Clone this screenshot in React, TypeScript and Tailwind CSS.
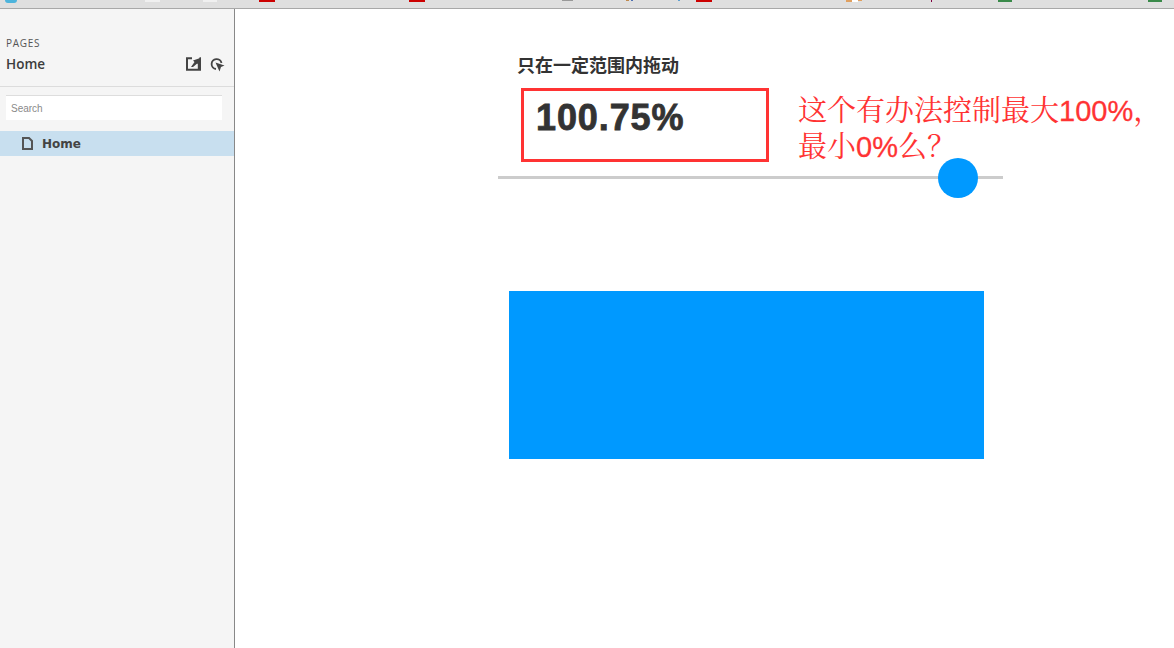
import React from "react";

const frags: [number, number, string, number][] = [
  [145, 15, "#f0f0f0", 2],
  [203, 14, "#f0f0f0", 2],
  [259, 16, "#cc0000", 2],
  [409, 16, "#cc0000", 2],
  [562, 11, "#999999", 1],
  [626, 3, "#c08a50", 1],
  [631, 2, "#5070b0", 1],
  [678, 2, "#60a0d0", 1],
  [696, 16, "#cc0000", 2],
  [846, 6, "#e0a060", 2],
  [852, 6, "#ffffff", 2],
  [858, 4, "#e0a060", 1],
  [931, 1, "#800040", 2],
  [998, 14, "#3a8a4a", 2],
  [1148, 14, "#3a8a4a", 2],
];

export default function App() {
  return (
    <div className="h-[648px] w-[1174px] overflow-hidden bg-white flex flex-col">
      <div className="relative h-[9px] shrink-0 bg-[#dfdfdf] border-b border-[#a8a8a8]">
        <div className="absolute top-0 left-[5px] w-[12px] h-[3px] rounded-b-full bg-[#4db4dc]" />
        {frags.map(([x, w, c, h], i) => (
          <div key={i} className="absolute top-0" style={{ left: x, width: w, background: c, height: h }} />
        ))}
      </div>
      <div className="flex flex-1 min-h-0">
        <aside className="w-[235px] shrink-0 bg-[#f5f5f5] border-r border-[#888888] flex flex-col font-['Open_Sans',sans-serif]">
          <div className="h-[78px] border-b border-[#dcdcdc] pl-[6px] pr-[10px] pt-[27px] shrink-0">
            <div className="text-[10px] leading-[14px] tracking-[0.7px] text-[#555555]">PAGES</div>
            <div className="flex items-center justify-between mt-[4px] h-[20px]">
              <span className="text-[13.5px] font-semibold text-[#3c3c3c] leading-[20px]">Home</span>
              <div className="flex items-center gap-[9px] mr-[-1px]">
                <svg width="15" height="14" viewBox="0 0 15 14">
                  <path d="M6 1.2H1v11.6h13V1.2h-.5M12.8 4v8" fill="none" stroke="#444" strokeWidth="2" />
                  <path d="M5 10l3.5-5L7 3.5 13.5 1.2 13 8l-1.8-1.6L7 10z" fill="#444" />
                </svg>
                <svg width="15" height="15" viewBox="0 0 15 15">
                  <path d="M6 12A5 5 0 1 1 11.5 6" fill="none" stroke="#444" strokeWidth="1.8" />
                  <path d="M5.5 5.5L14.5 8.5 11 10 9.5 14.5z" fill="#444" />
                </svg>
              </div>
            </div>
          </div>
          <div className="mx-[6px] mt-[8px] w-[216px] h-[25px] bg-white border-t border-[#dddddd] flex items-center pl-[5px] pt-[1px] font-['Liberation_Sans',sans-serif] text-[10px] text-[#8a8a8a] shrink-0">
            Search
          </div>
          <div className="mt-[11px] h-[25px] bg-[#c8dfef] flex items-center pl-[22px] shrink-0">
            <svg width="11" height="13" viewBox="0 0 11 13">
              <path d="M1 1h6l3 3v8H1z" fill="none" stroke="#555" strokeWidth="2" />
            </svg>
            <span className="ml-[9px] font-['DejaVu_Sans',sans-serif] font-bold text-[12px] text-[#444444]">Home</span>
          </div>
        </aside>
        <main className="flex-1 min-w-0 pl-[263px] pt-[45px] font-['Liberation_Sans','Noto_Sans_CJK_SC',sans-serif]">
          <div className="pl-[19px] h-[24px] text-[18px] leading-[24px] font-bold text-[#333333]">只在一定范围内拖动</div>
          <div className="flex mt-[10px] pl-[23px] h-[74px]">
            <div className="w-[248px] h-[74px] border-[3px] border-[#ff3333] pl-[12px] pt-[6px] text-[36px] leading-[42px] tracking-[0.9px] font-bold text-[#333333] [-webkit-text-stroke:0.8px_#333333] shrink-0">
              100.75%
            </div>
            <div className="ml-[29px] mt-[5px] text-[29px] leading-[36px] text-[#ff3333] whitespace-nowrap relative z-10 font-['Liberation_Sans','Noto_Serif_CJK_SC','Noto_Sans_CJK_SC',serif]">
              这个有办法控制最大<span className="[-webkit-text-stroke:0.3px_#ff3333]">100%</span>，<br />最小<span className="[-webkit-text-stroke:0.3px_#ff3333]">0%</span>么？
            </div>
          </div>
          <div className="relative mt-[14px] w-[505px] h-[3px] bg-[#cccccc]">
            <div className="absolute left-[440px] top-[-18px] w-[40px] h-[40px] rounded-full bg-[#0099ff] z-20" />
          </div>
          <div className="ml-[11px] mt-[112px] w-[475px] h-[168px] bg-[#0099ff]" />
        </main>
      </div>
    </div>
  );
}
